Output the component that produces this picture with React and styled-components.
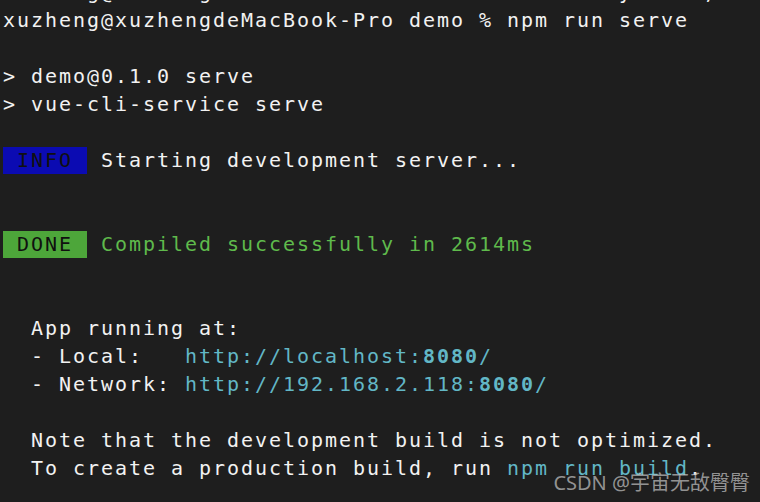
import React from 'react'
import styled, { createGlobalStyle } from 'styled-components'

const GlobalStyle = createGlobalStyle`
    html, body {
        margin: 0;
        padding: 0;
        background-color: #1e1e1e;
    }
`;

function App() {
    return (
        <Screen>
            <GlobalStyle />
            <Terminal>
                <Line>xuzheng@xuzhengdeMacBook-Pro ~ % cd demo && yarn ., .</Line>
                <Line>xuzheng@xuzhengdeMacBook-Pro demo % npm run serve</Line>
                <Line />
                <Line>&gt; demo@0.1.0 serve</Line>
                <Line>&gt; vue-cli-service serve</Line>
                <Line />
                <Line>
                    <Badge bg="#0b0bb2"> INFO </Badge> Starting development server...
                </Line>
                <Line />
                <Line />
                <Line>
                    <Badge bg="#4da63a"> DONE </Badge> <Green>Compiled successfully in 2614ms</Green>
                </Line>
                <Line />
                <Line />
                <Line>  App running at:</Line>
                <Line>
                    {'  - Local:   '}<Link>http://localhost:<b>8080</b>/</Link>
                </Line>
                <Line>
                    {'  - Network: '}<Link>http://192.168.2.118:<b>8080</b>/</Link>
                </Line>
                <Line />
                <Line>  Note that the development build is not optimized.</Line>
                <Line>
                    {'  To create a production build, run '}<Link>npm run build</Link>.
                </Line>
                <Line />
            </Terminal>
            <Watermark>CSDN @宇宙无敌臀臀</Watermark>
        </Screen>
    )
}

export default App

const Screen = styled.div`
    position: relative;
    width: 760px;
    height: 502px;
    overflow: hidden;
    background-color: #1e1e1e;
`;

const Terminal = styled.div`
    display: flex;
    flex-direction: column;
    margin-top: -22px;
    padding-left: 3px;
    font-family: "DejaVu Sans Mono", "Liberation Mono", monospace;
    font-size: 20px;
    letter-spacing: 1.96px;
    color: #f2f2f2;
`;

const Line = styled.div`
    height: 28px;
    line-height: 28px;
    white-space: pre;
`;

const Badge = styled.span`
    display: inline-block;
    height: 27px;
    line-height: 27px;
    background-color: ${props => props.bg};
    color: #101010;
`;

const Green = styled.span`
    color: #5fba4c;
`;

const Link = styled.span`
    color: #62b7c6;

    b {
        font-weight: 700;
    }
`;

const Watermark = styled.div`
    position: absolute;
    right: 10px;
    bottom: 6px;
    font-family: "Noto Sans", "Noto Sans CJK SC", sans-serif;
    font-size: 20px;
    color: rgba(200, 200, 200, 0.7);
`;
